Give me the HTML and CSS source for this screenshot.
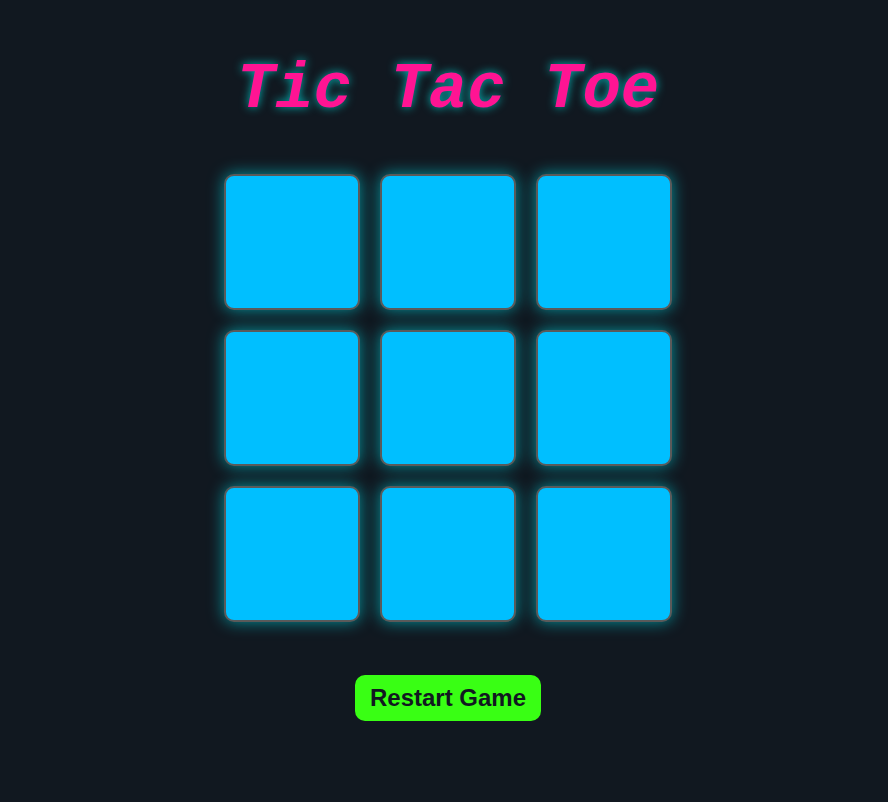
FILE: index.html
```html
<!DOCTYPE html>
<html>
<head>
<meta charset="utf-8">
<title>Tic Tac Toe</title>
<link rel="stylesheet" href="styles.css">
</head>
<body>
<main class="game">
  <h1 class="title">Tic Tac Toe</h1>
  <div class="board">
    <div class="cell"></div>
    <div class="cell"></div>
    <div class="cell"></div>
    <div class="cell"></div>
    <div class="cell"></div>
    <div class="cell"></div>
    <div class="cell"></div>
    <div class="cell"></div>
    <div class="cell"></div>
  </div>
  <button class="restart">Restart Game</button>
</main>
</body>
</html>
```

FILE: styles.css
```css
html, body {
  margin: 0;
  padding: 0;
  background: #111820;
  height: 100%;
}
.game {
  display: flex;
  flex-direction: column;
  align-items: center;
  padding-left: 8px;
  padding-top: 54px;
}
.title {
  margin: 0 0 48px;
  font-family: "Courier New", Courier, "Liberation Mono", monospace;
  font-weight: bold;
  font-style: italic;
  font-size: 64px;
  line-height: 72px;
  color: #ff1493;
  text-shadow: 0 0 10px rgba(0, 220, 220, 0.8);
}
.board {
  display: grid;
  grid-template-columns: repeat(3, 136px);
  grid-auto-rows: 136px;
  gap: 20px;
}
.cell {
  box-sizing: border-box;
  background: #00bfff;
  border: 2px solid #5a5a5a;
  border-radius: 10px;
  box-shadow: 0 0 16px rgba(0, 200, 210, 0.7);
}
.restart {
  margin-top: 53px;
  font-family: "Liberation Sans", Arial, sans-serif;
  font-weight: bold;
  font-size: 24px;
  line-height: 28px;
  padding: 9px 15px;
  border: none;
  border-radius: 10px;
  background: #39ff14;
  color: #111820;
}
```
